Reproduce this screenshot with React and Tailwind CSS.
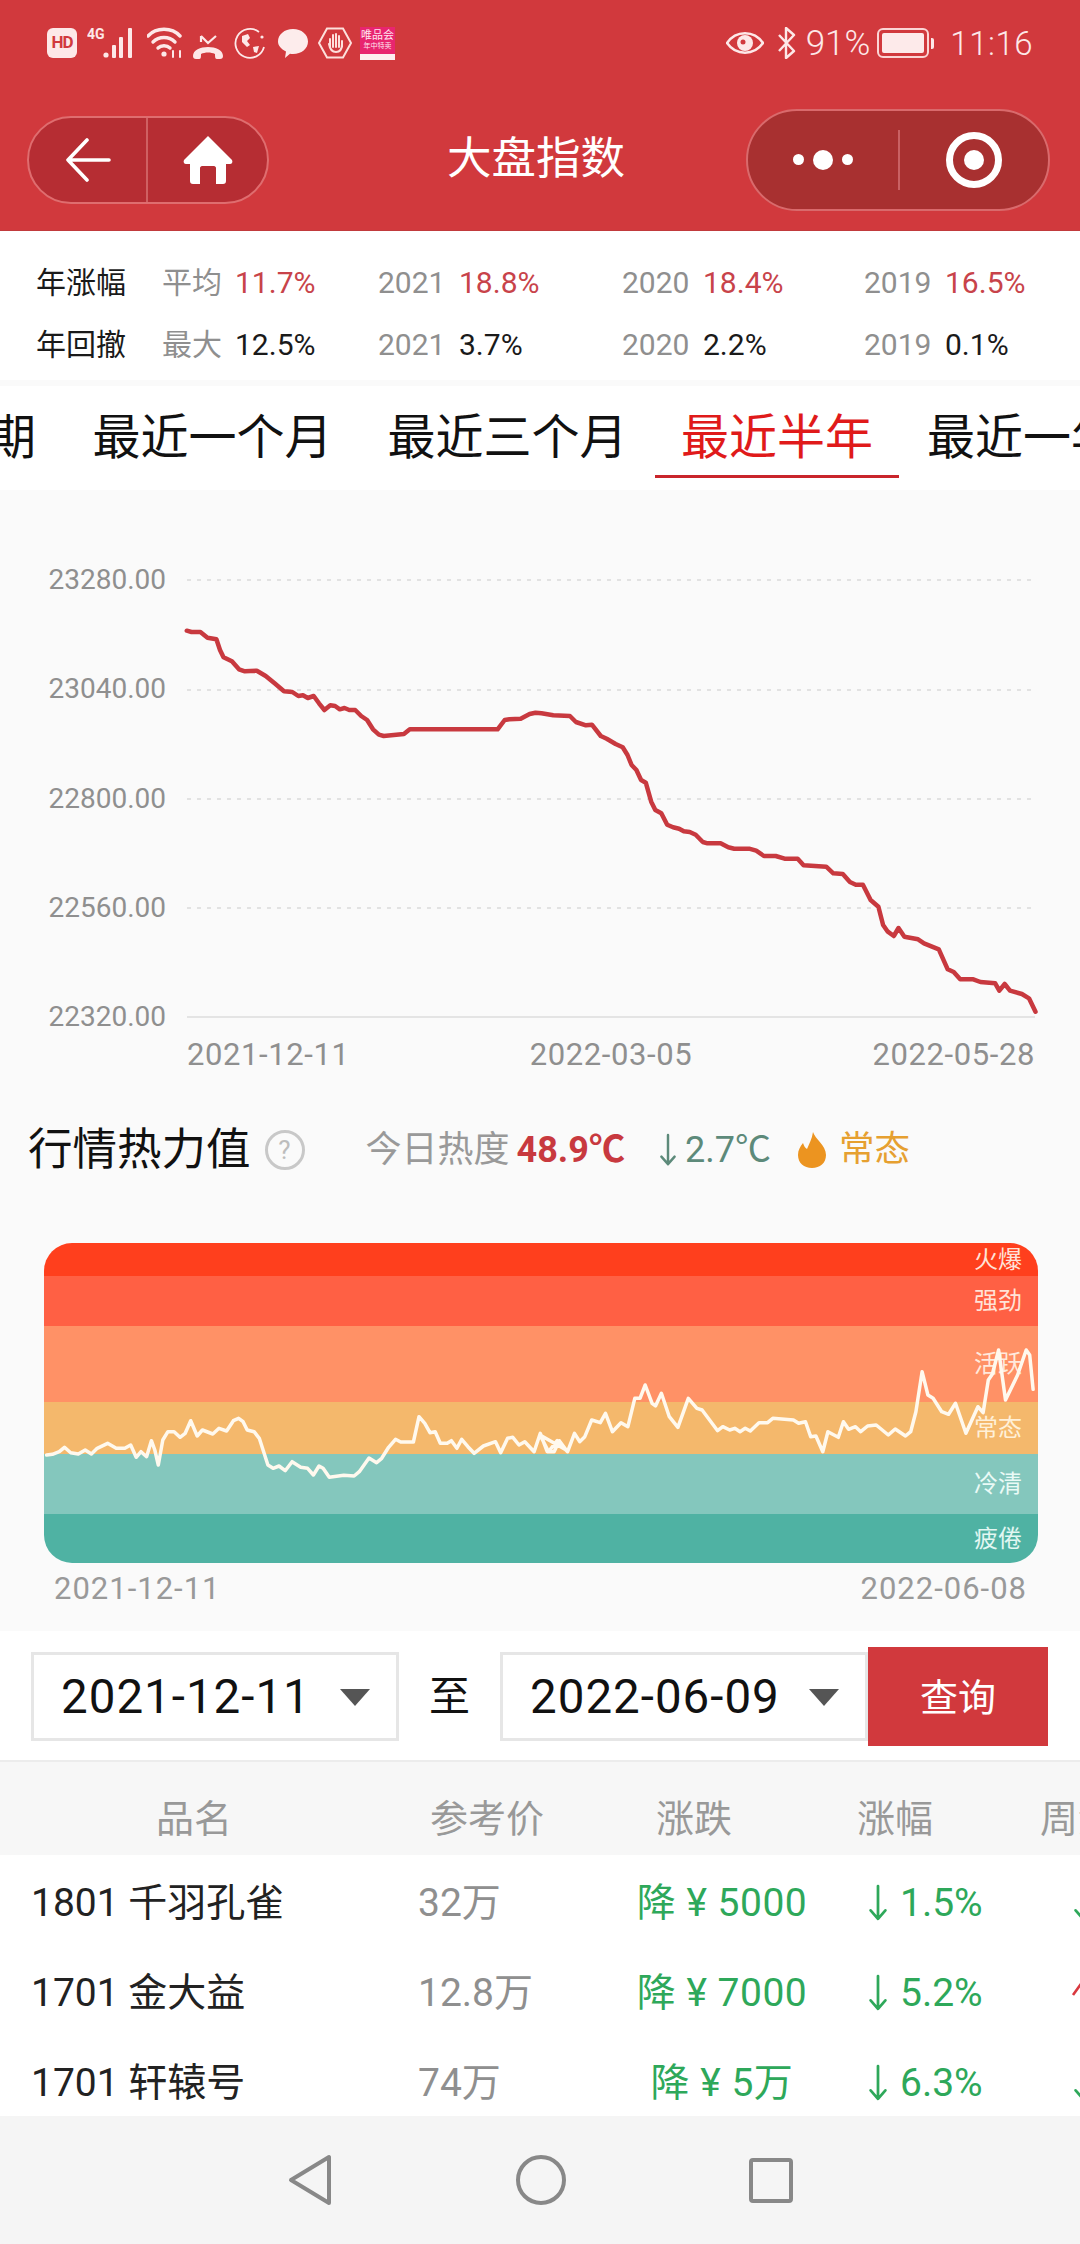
import React from "react";

// chart points read off the reference, in full page pixels
const marketLine = [
  [62,122],[70,126],[85,126],[97,143],[112,148],[118,180],[124,202],[138,214],[150,238],[160,244],[180,242],[195,258],[210,280],[226,304],[240,306],[250,318],[258,316],[266,324],[276,318],[285,340],[294,360],[304,346],[312,348],[320,358],[328,354],[336,360],[346,360],[356,378],[366,390],[376,418],[386,434],[394,438],[428,432],[438,418],[586,418],[598,390],[606,388],[625,386],[640,372],[650,368],[660,370],[680,376],[708,378],[718,396],[735,406],[745,404],[760,438],[770,446],[785,462],[797,472],[805,495],[812,525],[820,540],[828,570],[836,578],[845,635],[852,660],[862,670],[872,704],[882,712],[892,716],[900,724],[910,726],[920,734],[932,756],[940,760],[962,760],[975,772],[985,776],[1010,776],[1022,782],[1035,798],[1055,798],[1070,806],[1092,806],[1102,826],[1140,830],[1152,850],[1168,852],[1180,876],[1190,884],[1202,884],[1215,930],[1228,950],[1236,1005],[1244,1025],[1254,1038],[1262,1014],[1272,1040],[1295,1048],[1305,1060],[1330,1078],[1345,1138],[1355,1146],[1366,1168],[1388,1168],[1400,1176],[1425,1180],[1432,1202],[1441,1182],[1450,1202],[1470,1212],[1482,1225],[1493,1265],
]
  .map(([x, y]) => `${(150 + x / 1.686 - 175).toFixed(1)},${(590 + y / 3 - 560).toFixed(1)}`)
  .join(" ");

const heatLeft = [
  [48,675],[65,673],[85,665],[100,652],[118,668],[140,672],[160,660],[178,672],[195,655],[225,640],[250,655],[275,655],[292,645],[308,682],[322,665],[338,680],[352,632],[362,660],[372,705],[385,630],[400,605],[418,605],[435,622],[450,610],[466,572],[485,618],[500,600],[530,612],[548,595],[570,603],[590,572],[605,565],[618,575],[630,600],[650,605],[665,625],[690,705],[705,715],[722,708],[740,722],[760,695],[785,712],[805,715],[822,735],[838,708],[850,715],[868,742],[910,736],[940,738],[955,725],[983,684],[1005,698],[1020,685],[1040,652],[1060,628],[1075,636],[1112,636],[1128,560],[1145,580],[1160,608],[1175,605],[1190,640],[1210,640],[1222,632],[1238,655],[1252,628],[1270,650],[1288,670],[1315,648],[1350,635],[1365,668],[1385,625],[1400,622],[1418,645],[1435,635],[1462,665],[1480,610],[1500,665],[1520,665],[1535,632],[1555,660],
].map(([x, y]) => [30 + x / 2.9, y]);

const heatRight = [
  [0,615],[25,665],[50,632],[80,665],[100,610],[115,635],[130,620],[150,570],[175,578],[190,550],[210,605],[235,578],[255,590],[275,505],[290,505],[305,465],[325,520],[335,528],[352,490],[375,560],[400,592],[430,505],[455,535],[470,540],[515,602],[530,590],[550,600],[565,595],[580,605],[595,595],[610,603],[635,578],[660,578],[675,565],[735,570],[750,580],[770,575],[785,620],[800,618],[820,665],[835,605],[865,622],[880,575],[895,598],[915,590],[930,605],[950,588],[975,585],[1010,615],[1030,597],[1060,618],[1075,605],[1090,545],[1108,425],[1125,495],[1140,505],[1165,545],[1185,553],[1205,520],[1235,610],[1270,530],[1285,548],[1300,450],[1312,432],[1330,360],[1350,510],[1385,435],[1410,360],[1420,375],[1430,478],
].map(([x, y]) => [540 + x / 2.9, y]);

const heatLine = [...heatLeft, ...heatRight]
  .map(([x, y]) => `${(x - 44).toFixed(1)},${(1230 + y / 3 - 1243).toFixed(1)}`)
  .join(" ");

const stats = [
  { label: "年涨幅", color: "text-[#c8434a]", cells: [["平均", "11.7%"], ["2021", "18.8%"], ["2020", "18.4%"], ["2019", "16.5%"]] },
  { label: "年回撤", color: "text-[#1a1a1a]", cells: [["最大", "12.5%"], ["2021", "3.7%"], ["2020", "2.2%"], ["2019", "0.1%"]] },
];

const cellWidths = ["w-[216px]", "w-[244px]", "w-[242px]", "w-[216px]"];

const bands = [
  { label: "火爆", cls: "h-[33px] bg-[#ff3f1d] text-[#ffe3d8]" },
  { label: "强劲", cls: "h-[50px] bg-[#ff6044] text-[#ffe3d8]" },
  { label: "活跃", cls: "h-[76px] bg-[#ff9166] text-[#ffe9dc]" },
  { label: "常态", cls: "h-[52px] bg-[#f4b86c] text-[#fff0d8]" },
  { label: "冷清", cls: "h-[60px] bg-[#84c7bd] text-[#eafaf6]" },
  { label: "疲倦", cls: "h-[49px] bg-[#4fb2a3] text-[#e2f7f2]" },
];

const rows = [
  { name: "1801 千羽孔雀", price: "32万", change: "降 ¥ 5000", pct: "1.5%", up: false },
  { name: "1701 金大益", price: "12.8万", change: "降 ¥ 7000", pct: "5.2%", up: true },
  { name: "1701 轩辕号", price: "74万", change: "降 ¥ 5万", pct: "6.3%", up: false },
];

const DownArrow = ({ color, className }) => (
  <svg viewBox="0 0 18 36" className={className} fill="none" stroke={color} strokeWidth="2.6" strokeLinecap="round" strokeLinejoin="round">
    <path d="M9 2v31M2 25l7 8 7-8" />
  </svg>
);

const StatusIcons = () => (
  <div className="flex items-center pl-[47px]">
    <div className="flex h-[30px] w-[30px] items-center justify-center rounded-[6px] bg-[#fde8e8] text-[17px] font-bold tracking-[-1px] text-[#d1393d]">
      HD
    </div>
    <svg viewBox="0 0 52 32" className="ml-[10px] h-[32px] w-[52px]">
      <text x="0" y="12" fontSize="14" fontWeight="700" fill="#fde8e8">4G</text>
      <g fill="#fde8e8">
        <circle cx="19" cy="28" r="2.6" />
        <rect x="25" y="18" width="4" height="13" rx="1" />
        <rect x="32" y="10" width="4" height="21" rx="1" />
        <rect x="41" y="1" width="4" height="30" rx="1" />
      </g>
    </svg>
    <svg viewBox="0 0 38 32" className="ml-[8px] h-[32px] w-[38px]" fill="none" stroke="#fde8e8" strokeWidth="3.4" strokeLinecap="round">
      <path d="M1 9C9 0 25 0 33 9" />
      <path d="M6 15c6-6 16-6 22 0" />
      <path d="M11 21c3-3 9-3 12 0" />
      <circle cx="17" cy="27" r="2.6" fill="#fde8e8" stroke="none" />
      <path d="M26 24v6M33 24v6" strokeWidth="2" />
    </svg>
    <svg viewBox="0 0 32 26" className="ml-[7px] h-[26px] w-[32px] self-end" fill="none" stroke="#fde8e8">
      <path d="M9 2l7 7 8-7M9 2v6" strokeWidth="2.2" />
      <path d="M1 22c0-12 30-12 30 0 0 2-1 3-3 3h-3c-2 0-2-2-2-5-4-2-10-2-14 0 0 3 0 5-2 5H4c-2 0-3-1-3-3z" fill="#fde8e8" stroke="none" />
    </svg>
    <svg viewBox="0 0 32 32" className="ml-[10px] h-[32px] w-[32px]" fill="none" stroke="#fde8e8" strokeWidth="1.8">
      <path d="M25 5A14.5 14.5 0 1 0 30 20" />
      <path d="M8 9l6-2 2 4-3 3 3 4-3 2-5-5z" fill="#fde8e8" stroke="none" />
      <path d="M19 20l6-1-2 7-3-1z" fill="#fde8e8" stroke="none" />
      <circle cx="28" cy="10" r="1.6" fill="#fde8e8" stroke="none" />
    </svg>
    <svg viewBox="0 0 32 31" className="ml-[11px] h-[31px] w-[32px]" fill="#fdecec">
      <path d="M16 1c8.500 0 15 5.500 15 12.500S24.500 26 16 26c-1 0-2-.1-3-.3L8 30l1-6.500C4 21 1 17.500 1 13.500 1 6.500 7.500 1 16 1z" />
    </svg>
    <svg viewBox="0 0 34 32" className="ml-[9px] h-[32px] w-[34px]" fill="none">
      <path d="M9 1.500h16L33 16l-8 14.500H9L1 16z" stroke="#fde0dc" strokeWidth="2" />
      <path d="M12 20v-8M15 20V8M18 20V7M21 20V9M24 20l0-6M11 17c1 6 4 8 7 8s6-2 6-8" stroke="#fde0dc" strokeWidth="2" strokeLinecap="round" />
    </svg>
    <div className="ml-[8px] flex h-[33px] w-[35px] flex-col items-center bg-[#e8256f] pt-[3px] leading-none text-[#ffe4f0]">
      <span className="text-[11px] leading-[12px]">唯品会</span>
      <span className="text-[7px] leading-[8px]">年中特卖</span>
      <span className="mt-auto h-[6px] w-full bg-[#fdeef0]" />
    </div>
  </div>
);

const StatusRight = () => (
  <div className="ml-auto flex items-center pr-[47px] text-[#fde8e8]">
    <svg viewBox="0 0 38 26" className="h-[26px] w-[38px]" fill="none">
      <path d="M1 13C10 0 28 0 37 13 28 26 10 26 1 13z" stroke="#fde8e8" strokeWidth="2.6" />
      <circle cx="19" cy="13" r="8" fill="#fde8e8" />
      <circle cx="17" cy="12" r="2.500" fill="#d1393d" />
    </svg>
    <svg viewBox="0 0 22 32" className="ml-[12px] h-[32px] w-[22px]" fill="none" stroke="#fde8e8" strokeWidth="2.4" strokeLinejoin="round">
      <path d="M3 8l15 16-8 7V1l8 7L3 24" />
    </svg>
    <span className="ml-[8px] text-[35px] font-light leading-none">91%</span>
    <div className="ml-[7px] flex h-[30px] w-[52px] items-center rounded-[6px] border-[2.500px] border-[#fbd5d5] p-[3px]">
      <div className="h-full w-full rounded-[2px] bg-[#fdeaea]" />
    </div>
    <div className="ml-[2px] h-[11px] w-[3px] rounded-r-[2px] bg-[#fde8e8]" />
    <span className="ml-[16px] text-[33px] font-light leading-none tracking-[0.5px]">11:16</span>
  </div>
);

const Header = () => (
  <div className="flex h-[231px] flex-col border-b border-[#c13a3c] bg-[#d1393d]">
    <div className="flex h-[86px] items-center">
      <StatusIcons />
      <StatusRight />
    </div>
    <div className="flex flex-1 items-center pl-[27px] pr-[30px] pt-[3px] text-white">
      <div className="flex h-[88px] w-[242px] overflow-hidden rounded-[44px] border-2 border-[#df6d6f] bg-[#b62d33]">
        <div className="flex w-[119px] items-center justify-center border-r-2 border-[#cf6062]">
          <svg viewBox="0 0 46 44" className="h-[44px] w-[46px]" fill="none" stroke="white" strokeWidth="3.600" strokeLinecap="round" strokeLinejoin="round">
            <path d="M44 22H3M22 2L3 22l19 20" />
          </svg>
        </div>
        <div className="flex flex-1 items-center justify-center">
          <svg viewBox="0 0 50 50" className="h-[50px] w-[50px]" fill="white">
            <path d="M25 1L49 25c1 2 0 4-2 4h-4v17c0 2-1 3-3 3h-7V33c0-1-1-2-2-2h-12c-1 0-2 1-2 2v16h-7c-2 0-3-1-3-3V29H3c-2 0-3-2-2-4z" />
          </svg>
        </div>
      </div>
      <div className="ml-[178px] text-[44.500px] leading-none">大盘指数</div>
      <div className="ml-auto flex h-[102px] w-[304px] items-center rounded-[51px] border-2 border-[#d96a6c] bg-[#a83030]">
        <div className="flex w-[150px] items-center justify-center gap-[9px]">
          <span className="h-[11px] w-[11px] rounded-full bg-white" />
          <span className="h-[20px] w-[20px] rounded-full bg-white" />
          <span className="h-[11px] w-[11px] rounded-full bg-white" />
        </div>
        <div className="h-[60px] w-[1.500px] bg-[#c96163]" />
        <div className="flex flex-1 items-center justify-center">
          <div className="flex h-[56px] w-[56px] items-center justify-center rounded-full border-[7px] border-white">
            <span className="h-[20px] w-[20px] rounded-full bg-white" />
          </div>
        </div>
      </div>
    </div>
  </div>
);

const Stats = () => (
  <div className="flex h-[149px] flex-col gap-[22px] bg-white pl-[36px] pt-[32px] text-[30px] leading-[40px]">
    {stats.map((row) => (
      <div key={row.label} className="flex">
        <div className="w-[126px] shrink-0 text-[#1a1a1a]">{row.label}</div>
        {row.cells.map(([k, v], i) => (
          <div key={k + v} className={`flex shrink-0 ${cellWidths[i]}`}>
            <span className={`${i === 0 ? "w-[73px]" : "w-[81px]"} text-[#8f8f8f]`}>{k}</span>
            <span className={row.color}>{v}</span>
          </div>
        ))}
      </div>
    ))}
  </div>
);

const Tabs = () => (
  <div className="mt-[6px] flex h-[104px] overflow-hidden bg-white text-[48px] leading-none text-[#111]">
    <div className="ml-[-12px] flex shrink-0 items-center pr-[29px]">期</div>
    {["最近一个月", "最近三个月"].map((t) => (
      <div key={t} className="flex shrink-0 items-center whitespace-nowrap px-[27.500px]">{t}</div>
    ))}
    <div className="relative flex shrink-0 items-center whitespace-nowrap px-[26px] text-[#e01a1a]">
      最近半年
      <span className="absolute bottom-[12px] left-0 h-[3px] w-full bg-[#c9252b]" />
    </div>
    <div className="flex shrink-0 items-center whitespace-nowrap pl-[28px]">最近一年</div>
  </div>
);

const MarketChart = () => (
  <div className="pt-[70px]">
    <div className="flex">
      <div className="flex h-[477px] w-[166px] flex-col justify-between text-right text-[28px] leading-[40px] text-[#8f8f8f]">
        <span>23280.00</span>
        <span>23040.00</span>
        <span>22800.00</span>
        <span>22560.00</span>
        <span>22320.00</span>
      </div>
      <svg width="875" height="477" viewBox="0 0 875 477" className="ml-[9px]">
        {[20, 130, 239, 348].map((y) => (
          <line key={y} x1="12" x2="860" y1={y} y2={y} stroke="#e2e2e2" strokeWidth="2" strokeDasharray="4 6" />
        ))}
        <line x1="12" x2="860" y1="457" y2="457" stroke="#e4e4e4" strokeWidth="2" />
        <polyline points={marketLine} fill="none" stroke="#c8393f" strokeWidth="4.500" strokeLinejoin="round" strokeLinecap="round" />
      </svg>
    </div>
    <div className="flex justify-between pl-[187px] pr-[45px] text-[31px] leading-[36px] tracking-[0.6px] text-[#8f8f8f]">
      <span>2021-12-11</span>
      <span>2022-03-05</span>
      <span>2022-05-28</span>
    </div>
  </div>
);

const HeatTitle = () => (
  <div className="mt-[49px] flex items-center pl-[28px]">
    <span className="text-[44.500px] leading-[56px] text-[#111]">行情热力值</span>
    <span className="ml-[14px] flex h-[40px] w-[40px] items-center justify-center rounded-full border-[3px] border-[#c8c8c8] text-[26px] leading-none text-[#bdbdbd]">?</span>
    <span className="ml-[61px] text-[36px] leading-none text-[#999]">今日热度</span>
    <span className="ml-[7px] text-[36px] font-bold leading-none text-[#c8393f]">48.9℃</span>
    <DownArrow color="#5d8a7a" className="ml-[33px] h-[34px] w-[20px]" />
    <span className="ml-[7px] text-[36px] leading-none text-[#5d8a7a]">2.7℃</span>
    <svg viewBox="0 0 28 36" className="ml-[27px] h-[36px] w-[28px]">
      <path d="M15 0c2 7 13 13 13 23 0 8-6 13-14 13S0 31 0 23c0-5 2-8 5-12 1 3 2 5 4 6 2-5 5-10 6-17z" fill="#ec9420" />
    </svg>
    <span className="ml-[13px] text-[35.500px] leading-none text-[#e6a030]">常态</span>
  </div>
);

const HeatChart = () => (
  <div className="mt-[65px] pl-[44px] pr-[42px]">
    <div className="relative overflow-hidden rounded-[28px]">
      {bands.map((b) => (
        <div key={b.label} className={`flex items-center justify-end pr-[16px] text-[24px] leading-none ${b.cls}`}>
          {b.label}
        </div>
      ))}
      <svg className="absolute left-0 top-0 h-[320px] w-[994px]" viewBox="0 0 994 320">
        <polyline points={heatLine} fill="none" stroke="#fff9ee" strokeWidth="3.500" strokeLinejoin="round" strokeLinecap="round" />
      </svg>
    </div>
    <div className="flex justify-between pl-[10px] pr-[11px] pt-[9px] text-[31px] leading-[34px] tracking-[1px] text-[#999]">
      <span>2021-12-11</span>
      <span>2022-06-08</span>
    </div>
  </div>
);

const DateSelect = ({ value }) => (
  <div className="flex h-[89px] w-[368px] shrink-0 items-center border-[3px] border-[#e6e6e6] bg-white pl-[27px] pt-[2px] text-[47.500px] leading-none text-[#111]">
    <span className="tracking-[1px]">{value}</span>
    <span className="ml-auto mr-[26px] h-0 w-0 border-x-[15px] border-t-[17px] border-x-transparent border-t-[#555]" />
  </div>
);

const Filter = () => (
  <div className="mt-[25px] flex h-[131px] items-center border-b-2 border-[#ececec] bg-white pl-[31px] pt-[2px]">
    <DateSelect value="2021-12-11" />
    <span className="mx-[30px] shrink-0 pt-[2px] text-[41px] leading-none text-[#111]">至</span>
    <DateSelect value="2022-06-09" />
    <button className="flex h-[99px] w-[180px] shrink-0 items-center justify-center bg-[#d1393d] pt-[3px] text-[38px] leading-none text-white">查询</button>
  </div>
);

const Table = () => (
  <div className="h-[354px] overflow-hidden">
    <div className="flex h-[93px] items-center bg-[#f7f7f7] pt-[20px] text-[38px] leading-none text-[#999]">
      <span className="w-[430px] shrink-0 pl-[156px]">品名</span>
      <span className="w-[226px] shrink-0">参考价</span>
      <span className="w-[201px] shrink-0">涨跌</span>
      <span className="w-[183px] shrink-0">涨幅</span>
      <span className="shrink-0 whitespace-nowrap">周涨幅</span>
    </div>
    <div className="bg-white pb-[40px] pt-[3px]">
      {rows.map((r) => (
        <div key={r.name} className="flex h-[90px] items-center text-[39px] leading-none">
          <span className="w-[418px] shrink-0 pl-[31px] text-[#222]">{r.name}</span>
          <span className="w-[200px] shrink-0 text-[#8f8f8f]">{r.price}</span>
          <span className="w-[208px] shrink-0 text-center tracking-[0.5px] text-[#2ea85a]">{r.change}</span>
          <span className="flex w-[236px] shrink-0 items-center pl-[42px] text-[#2ea85a]">
            <DownArrow color="#2ea85a" className="h-[38px] w-[20px]" />
            <span className="ml-[12px]">{r.pct}</span>
          </span>
          {r.up ? (
            <svg viewBox="0 0 20 36" className="ml-[9px] h-[36px] w-[20px] shrink-0" fill="none" stroke="#d9383f" strokeWidth="2.6">
              <path d="M2 20L12 6l8 10" />
            </svg>
          ) : (
            <DownArrow color="#2ea85a" className="ml-[11px] h-[38px] w-[20px] shrink-0" />
          )}
        </div>
      ))}
    </div>
  </div>
);

const BottomNav = () => (
  <div className="flex h-[128px] items-center justify-center gap-[183px] bg-[#f5f5f5]">
    <svg viewBox="0 0 46 52" className="h-[52px] w-[46px]" fill="none" stroke="#888" strokeWidth="4" strokeLinejoin="round">
      <path d="M42 3v46L4 26z" />
    </svg>
    <div className="h-[50px] w-[50px] rounded-full border-[4px] border-[#888]" />
    <div className="h-[45px] w-[44px] rounded-[4px] border-[4px] border-[#888]" />
  </div>
);

export default function App() {
  return (
    <div className="h-[2244px] w-[1080px] overflow-hidden bg-[#fafafa] font-[Roboto,'Noto_Sans_CJK_SC',sans-serif]">
      <Header />
      <Stats />
      <Tabs />
      <MarketChart />
      <HeatTitle />
      <HeatChart />
      <Filter />
      <Table />
      <BottomNav />
    </div>
  );
}
